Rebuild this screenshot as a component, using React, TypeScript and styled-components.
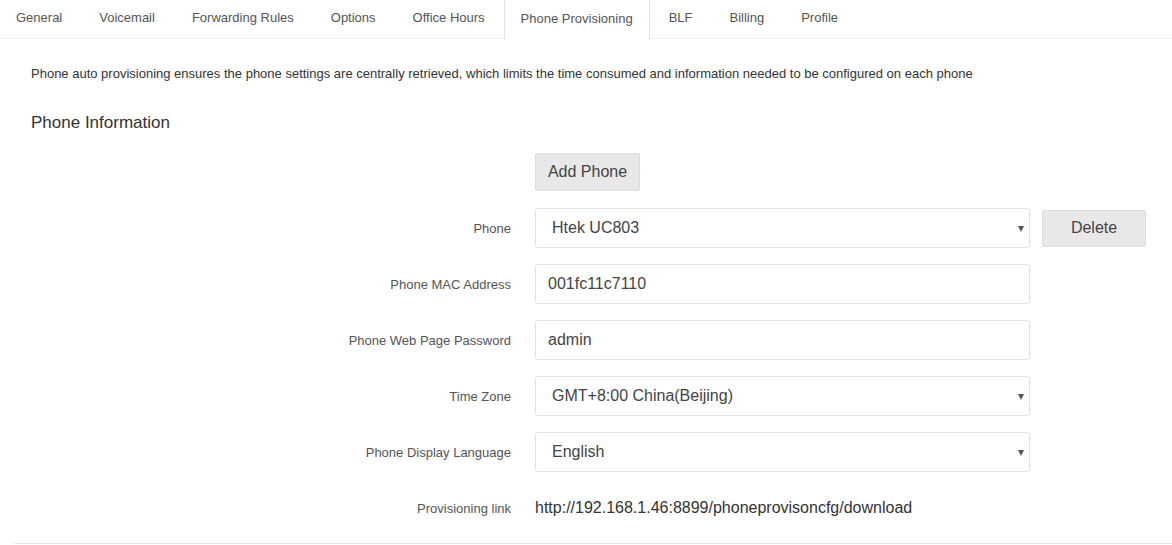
import styled, { createGlobalStyle } from "styled-components";

const GlobalStyle = createGlobalStyle`
  body {
    margin: 0;
    background: #fff;
    font-family: "Liberation Sans", Arial, sans-serif;
    color: #333;
  }
  * {
    box-sizing: border-box;
  }
`;

const tabs = [
  "General",
  "Voicemail",
  "Forwarding Rules",
  "Options",
  "Office Hours",
  "Phone Provisioning",
  "BLF",
  "Billing",
  "Profile",
];

const App = () => {
  return (
    <>
      <GlobalStyle />
      <TabBar>
        {tabs.map((t) => (
          <Tab key={t} $active={t === "Phone Provisioning"}>
            {t}
          </Tab>
        ))}
      </TabBar>
      <Content>
        <Description>
          Phone auto provisioning ensures the phone settings are centrally
          retrieved, which limits the time consumed and information needed to
          be configured on each phone
        </Description>
        <Heading>Phone Information</Heading>
        <Form>
          <span />
          <ButtonCell>
            <GrayButton $w={105} $h={38}>Add Phone</GrayButton>
          </ButtonCell>
          <span />

          <Label>Phone</Label>
          <SelectBox>
            <span>Htek UC803</span>
            <Arrow />
          </SelectBox>
          <GrayButton $w={104} $h={37}>Delete</GrayButton>

          <Label>Phone MAC Address</Label>
          <Input defaultValue="001fc11c7110" />
          <span />

          <Label>Phone Web Page Password</Label>
          <Input defaultValue="admin" />
          <span />

          <Label>Time Zone</Label>
          <SelectBox>
            <span>GMT+8:00 China(Beijing)</span>
            <Arrow />
          </SelectBox>
          <span />

          <Label>Phone Display Language</Label>
          <SelectBox>
            <span>English</span>
            <Arrow />
          </SelectBox>
          <span />

          <Label>Provisioning link</Label>
          <LinkText>http://192.168.1.46:8899/phoneprovisoncfg/download</LinkText>
          <span />
        </Form>
      </Content>
    </>
  );
};

export default App;

const TabBar = styled.div`
  display: flex;
  align-items: flex-start;
  height: 39px;
  border-bottom: 1px solid #eee;
`;

const Tab = styled.div<{ $active?: boolean }>`
  height: ${(p) => (p.$active ? "39px" : "38px")};
  padding: 0 ${(p) => (p.$active ? "16px" : "17px")} 3px;
  margin-right: 1px;
  display: flex;
  align-items: center;
  font-size: 13px;
  color: #555;
  background: #fff;
  border-left: 1px solid ${(p) => (p.$active ? "#e2e2e2" : "transparent")};
  border-right: 1px solid ${(p) => (p.$active ? "#e2e2e2" : "transparent")};
  &:first-child {
    padding-left: 15px;
  }
`;

const Content = styled.div`
  margin-left: 15px;
  padding: 26px 0 15px 16px;
  border-bottom: 1px solid #e5e5e5;
`;

const Description = styled.p`
  margin: 0;
  font-size: 13px;
  line-height: 18px;
  color: #333;
`;

const Heading = styled.h3`
  margin: 28px 0 18px;
  font-size: 17px;
  font-weight: normal;
  line-height: 24px;
  color: #333;
`;

const Form = styled.div`
  display: grid;
  grid-template-columns: 480px 495px 104px;
  column-gap: 24px;
  row-gap: 16px;
  align-items: center;
  & > :nth-child(3n) {
    margin-left: -12px;
  }
`;

const ButtonCell = styled.div`
  display: flex;
  margin-bottom: 1px;
`;

const GrayButton = styled.button<{ $w: number; $h: number }>`
  width: ${(p) => p.$w}px;
  height: ${(p) => p.$h}px;
  background: #e8e8e8;
  border: 1px solid #ddd;
  border-radius: 2px;
  font-family: "Liberation Sans", Arial, sans-serif;
  font-size: 16px;
  color: #444;
  padding: 0;
  cursor: pointer;
`;

const Label = styled.label`
  text-align: right;
  font-size: 13px;
  color: #555;
`;

const Input = styled.input`
  height: 40px;
  width: 495px;
  border: 1px solid #e3e3e3;
  border-radius: 3px;
  padding: 0 12px;
  font-family: "Liberation Sans", Arial, sans-serif;
  font-size: 16px;
  color: #444;
  outline: none;
`;

const SelectBox = styled.div`
  position: relative;
  height: 40px;
  width: 495px;
  border: 1px solid #e3e3e3;
  border-radius: 3px;
  padding: 0 16px;
  display: flex;
  align-items: center;
  font-size: 16px;
  color: #444;
`;

const Arrow = styled.span`
  position: absolute;
  right: 5px;
  top: 17px;
  width: 0;
  height: 0;
  border-left: 3.5px solid transparent;
  border-right: 3.5px solid transparent;
  border-top: 6px solid #555;
`;

const LinkText = styled.div`
  height: 40px;
  display: flex;
  align-items: center;
  font-size: 16px;
  color: #333;
`;
